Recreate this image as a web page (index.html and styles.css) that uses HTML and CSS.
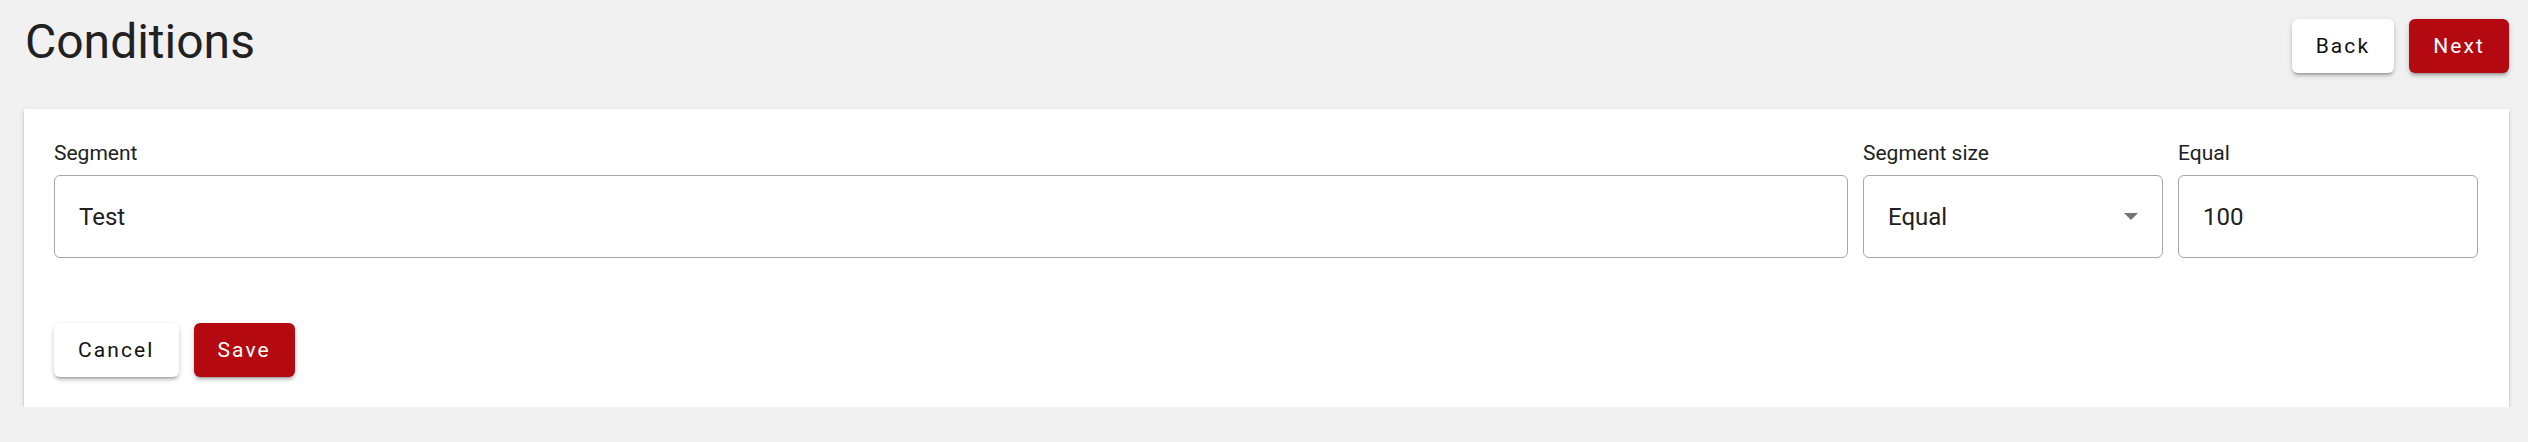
FILE: index.html
```html
<!DOCTYPE html>
<html lang="en">
<head>
<meta charset="utf-8">
<title>Conditions</title>
<link rel="stylesheet" href="styles.css">
</head>
<body>
<div class="page">
  <header class="header">
    <h1 class="title">Conditions</h1>
    <div class="header-actions">
      <button class="btn btn-light">Back</button>
      <button class="btn btn-primary">Next</button>
    </div>
  </header>
  <section class="card">
    <div class="fields">
      <div class="field">
        <label class="label">Segment</label>
        <div class="input">Test</div>
      </div>
      <div class="field">
        <label class="label">Segment size</label>
        <div class="input select"><span>Equal</span><span class="caret"></span></div>
      </div>
      <div class="field">
        <label class="label">Equal</label>
        <div class="input">100</div>
      </div>
    </div>
    <div class="card-actions">
      <button class="btn btn-light">Cancel</button>
      <button class="btn btn-primary">Save</button>
    </div>
  </section>
</div>
</body>
</html>
```

FILE: styles.css
```css
* { box-sizing: border-box; }
html, body {
  margin: 0;
  background: #f1f1f1;
  font-family: Roboto, "Liberation Sans", Arial, sans-serif;
  color: #212121;
}
.page {
  padding: 14px 19px 0 24px;
}
.header {
  display: flex;
  justify-content: space-between;
  align-items: flex-start;
  margin-bottom: 36px;
}
.title {
  margin: 0;
  font-size: 48px;
  font-weight: 400;
  line-height: 56px;
  color: #212121;
  padding-left: 1px;
}
.header-actions {
  display: flex;
  gap: 15px;
  margin-top: 5px;
}
.btn {
  height: 54px;
  padding: 0 24px;
  border: none;
  border-radius: 6px;
  font-family: Roboto, "Liberation Sans", Arial, sans-serif;
  font-size: 21px;
  font-weight: 400;
  letter-spacing: 2.1px;
  cursor: pointer;
  box-shadow: 0 4px 2px -3px rgba(0,0,0,0.2), 0 3px 3px 0 rgba(0,0,0,0.14), 0 2px 7px 0 rgba(0,0,0,0.12);
}
.btn-light {
  background: #ffffff;
  color: #111111;
}
.btn-primary {
  background: #b50911;
  color: #ffffff;
}
.card {
  background: #ffffff;
  padding: 32px 31px 30px 30px;
  box-shadow: 0 3px 2px -1px rgba(0,0,0,0.2), 0 2px 2px 0 rgba(0,0,0,0.14), 0 2px 5px 0 rgba(0,0,0,0.12);
}
.fields {
  display: grid;
  grid-template-columns: 1fr 300px 300px;
  gap: 15px;
}
.field {
  display: flex;
  flex-direction: column;
}
.label {
  font-size: 21px;
  line-height: 24px;
  margin-bottom: 10px;
  color: #212121;
}
.input {
  height: 83px;
  border: 1px solid #a6a6a6;
  border-radius: 6px;
  padding: 0 24px;
  display: flex;
  align-items: center;
  font-size: 24px;
  color: #212121;
}
.select {
  justify-content: space-between;
}
.caret {
  width: 0;
  height: 0;
  border-left: 7px solid transparent;
  border-right: 7px solid transparent;
  border-top: 7px solid #757575;
}
.card-actions {
  display: flex;
  gap: 15px;
  margin-top: 65px;
}
```
